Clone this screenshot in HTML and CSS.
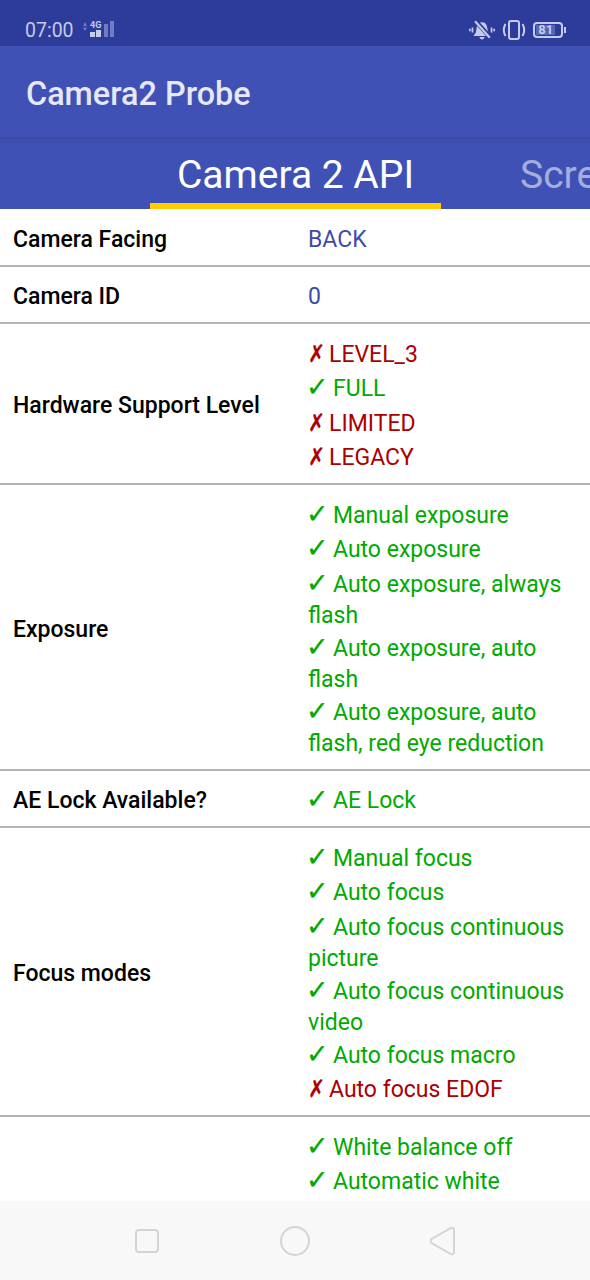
FILE: index.html
```html
<!DOCTYPE html>
<html>
<head>
    <meta charset="UTF-8">
    <meta name="viewport" content="width=device-width, initial-scale=1.0">
    <title>Camera2 Probe</title>
    <link rel="stylesheet" href="styles.css">
</head>
<body>
    <div class="status-bar">
        <span class="clock">07:00</span>
        <svg class="signal" width="36" height="24" viewBox="0 0 36 24">
            <path d="M2 8 L4 4 L6 8 Z M2 9.500 L6 9.500 L4 13 Z" fill="#6f7cc4"/>
            <text x="9" y="10" class="net-type">4G</text>
            <rect x="9" y="14" width="5" height="5" fill="#c5cbe8"/>
            <rect x="15" y="12" width="5" height="7" fill="#c5cbe8"/>
            <rect x="23" y="6" width="4" height="13" fill="#6f7cc4"/>
            <rect x="29" y="3" width="4" height="16" fill="#6f7cc4"/>
        </svg>
        <div class="status-right">
            <svg width="26" height="22" viewBox="0 0 30 24">
                <path d="M9 8 Q10 3 15 3 Q20 3 21 9 L22 15 L25 19 L5 19 L8 15 Z M12 20 L18 20 Q17 23 15 23 Q13 23 12 20 Z" fill="#c5cbe8"/>
                <path d="M7 1 L25 21" stroke="#2d3c9b" stroke-width="5"/>
                <path d="M7 2 L24 21" stroke="#c5cbe8" stroke-width="2.500"/>
                <path d="M4 9 V15 M1 10.500 V13.500 M26 9 V15 M29 10.500 V13.500" stroke="#c5cbe8" stroke-width="2" fill="none"/>
            </svg>
            <svg width="24" height="22" viewBox="0 0 24 22">
                <rect x="7" y="2" width="10" height="18" rx="2" fill="none" stroke="#c5cbe8" stroke-width="2"/>
                <path d="M3.500 5 Q0 11 3.500 17 M20.500 5 Q24 11 20.500 17" fill="none" stroke="#c5cbe8" stroke-width="2"/>
            </svg>
            <div class="battery"><span class="battery-level">81</span></div>
        </div>
    </div>

    <header class="app-bar">Camera2 Probe</header>

    <nav class="tabs">
        <div class="tab active">Camera 2 API</div>
        <div class="tab">Screen</div>
    </nav>

    <main class="content">
        <div class="row">
            <div class="label">Camera Facing</div>
            <div class="value info">BACK</div>
        </div>
        <div class="row">
            <div class="label">Camera ID</div>
            <div class="value info">0</div>
        </div>
        <div class="row">
            <div class="label">Hardware Support Level</div>
            <div class="value">
                <div class="no"><span class="mark">✗</span>LEVEL_3</div>
                <div class="yes"><span class="mark">✓</span>FULL</div>
                <div class="no"><span class="mark">✗</span>LIMITED</div>
                <div class="no"><span class="mark">✗</span>LEGACY</div>
            </div>
        </div>
        <div class="row">
            <div class="label">Exposure</div>
            <div class="value">
                <div class="yes"><span class="mark">✓</span>Manual exposure</div>
                <div class="yes"><span class="mark">✓</span>Auto exposure</div>
                <div class="yes wrapped"><span class="mark">✓</span>Auto exposure, always flash</div>
                <div class="yes wrapped"><span class="mark">✓</span>Auto exposure, auto flash</div>
                <div class="yes wrapped"><span class="mark">✓</span>Auto exposure, auto flash, red eye reduction</div>
            </div>
        </div>
        <div class="row">
            <div class="label">AE Lock Available?</div>
            <div class="value">
                <div class="yes"><span class="mark">✓</span>AE Lock</div>
            </div>
        </div>
        <div class="row">
            <div class="label">Focus modes</div>
            <div class="value">
                <div class="yes"><span class="mark">✓</span>Manual focus</div>
                <div class="yes"><span class="mark">✓</span>Auto focus</div>
                <div class="yes wrapped"><span class="mark">✓</span>Auto focus continuous picture</div>
                <div class="yes wrapped"><span class="mark">✓</span>Auto focus continuous video</div>
                <div class="yes"><span class="mark">✓</span>Auto focus macro</div>
                <div class="no"><span class="mark">✗</span>Auto focus EDOF</div>
            </div>
        </div>
        <div class="row">
            <div class="label">White balance</div>
            <div class="value">
                <div class="yes"><span class="mark">✓</span>White balance off</div>
                <div class="yes wrapped"><span class="mark">✓</span>Automatic white balance</div>
                <div class="yes"><span class="mark">✓</span>Incandescent</div>
                <div class="yes"><span class="mark">✓</span>Fluorescent</div>
                <div class="yes"><span class="mark">✓</span>Daylight</div>
            </div>
        </div>
    </main>

    <footer class="nav-bar">
        <svg width="26" height="26" viewBox="0 0 26 26">
            <rect x="2" y="2" width="22" height="22" rx="3" fill="none" stroke="#d4d4d4" stroke-width="2"/>
        </svg>
        <svg width="30" height="30" viewBox="0 0 30 30">
            <circle cx="15" cy="15" r="14" fill="none" stroke="#d4d4d4" stroke-width="2"/>
        </svg>
        <svg width="26" height="30" viewBox="0 0 26 30">
            <path d="M21 2 Q24 1 24 4 V26 Q24 29 21 28 L1.500 17 Q-0.500 15 1.500 13 Z" fill="none" stroke="#d4d4d4" stroke-width="2"/>
        </svg>
    </footer>
</body>
</html>
```

FILE: styles.css
```css
:root {
    --primary-color: #3f51b5;
    --status-color: #2d3c9b;
    --accent-color: #ffcc00;
    --yes-color: #00aa00;
    --no-color: #aa0000;
    --info-color: #3f4ba8;
    --line-color: #b4b4b4;
}

html, body {
    margin: 0;
    height: 100%;
}

body {
    font-family: Roboto, 'DejaVu Sans', sans-serif;
    height: 1280px;
    overflow: hidden;
    display: flex;
    flex-direction: column;
    background: white;
    color: #000;
}

.status-bar {
    flex: none;
    height: 46px;
    box-sizing: border-box;
    padding: 14px 24px 0 25px;
    display: flex;
    align-items: center;
    background-color: var(--status-color);
    color: #c5cbe8;
}

.clock {
    font-size: 19.500px;
    margin-right: 7px;
}

.net-type {
    font-family: Roboto, sans-serif;
    font-size: 9px;
    font-weight: 700;
    fill: #c5cbe8;
}

.status-right {
    margin-left: auto;
    display: flex;
    align-items: center;
    gap: 7px;
}

.battery {
    position: relative;
    width: 30px;
    height: 16px;
    box-sizing: border-box;
    border: 2px solid #c5cbe8;
    border-radius: 4px;
    padding: 1px;
    margin-right: 3px;
    display: flex;
}

.battery::after {
    content: "";
    position: absolute;
    right: -5px;
    top: 3px;
    width: 2px;
    height: 6px;
    background: #c5cbe8;
}

.battery-level {
    width: 81%;
    background: #5565b8;
    font-size: 13px;
    font-weight: 700;
    line-height: 10px;
    text-align: center;
    white-space: nowrap;
}

.app-bar {
    flex: none;
    height: 91px;
    box-sizing: border-box;
    padding-left: 26px;
    line-height: 96px;
    font-size: 32.400px;
    font-weight: 500;
    color: #e6e8f5;
    background-color: var(--primary-color);
}

.tabs {
    flex: none;
    height: 72px;
    box-sizing: border-box;
    padding-left: 150px;
    display: flex;
    overflow: hidden;
    background: linear-gradient(#3a4aa8, var(--primary-color) 8px);
}

.tab {
    flex: none;
    width: 291px;
    box-sizing: border-box;
    text-align: center;
    font-size: 39px;
    line-height: 76px;
    color: rgba(255, 255, 255, 0.55);
    white-space: nowrap;
}

.tab + .tab {
    margin-left: 79px;
    width: auto;
}

.tab.active {
    color: white;
    border-bottom: 6px solid var(--accent-color);
}

.content {
    flex: 1;
    min-height: 0;
    overflow: hidden;
}

.row {
    display: flex;
    align-items: center;
    border-bottom: 2px solid var(--line-color);
    padding: 14.500px 0 10px;
    font-size: 23px;
}

.label {
    flex: none;
    width: 295px;
    box-sizing: border-box;
    padding-left: 13px;
    font-weight: 500;
}

.value {
    flex: 1;
    padding: 0 24px 0 13px;
    line-height: 31px;
}

.value > div {
    margin-bottom: 3.500px;
}

.value > .wrapped {
    margin-bottom: 2px;
}

.value > div:last-child {
    margin-bottom: 0;
}

.mark {
    display: inline-block;
    width: 27px;
    margin-left: -2px;
    line-height: 0;
    font-family: 'DejaVu Sans', sans-serif;
    font-size: 27px;
    -webkit-text-stroke: 0.3px currentColor;
}

.no .mark {
    width: 21px;
    margin-left: 0;
    font-size: 24px;
    transform: scaleX(0.85);
    transform-origin: left center;
}

.info {
    color: var(--info-color);
}

.yes {
    color: var(--yes-color);
}

.no {
    color: var(--no-color);
}

.nav-bar {
    flex: none;
    height: 79px;
    display: flex;
    align-items: center;
    background-color: #f8f8f8;
    padding-left: 134px;
    gap: 120px;
}
```
